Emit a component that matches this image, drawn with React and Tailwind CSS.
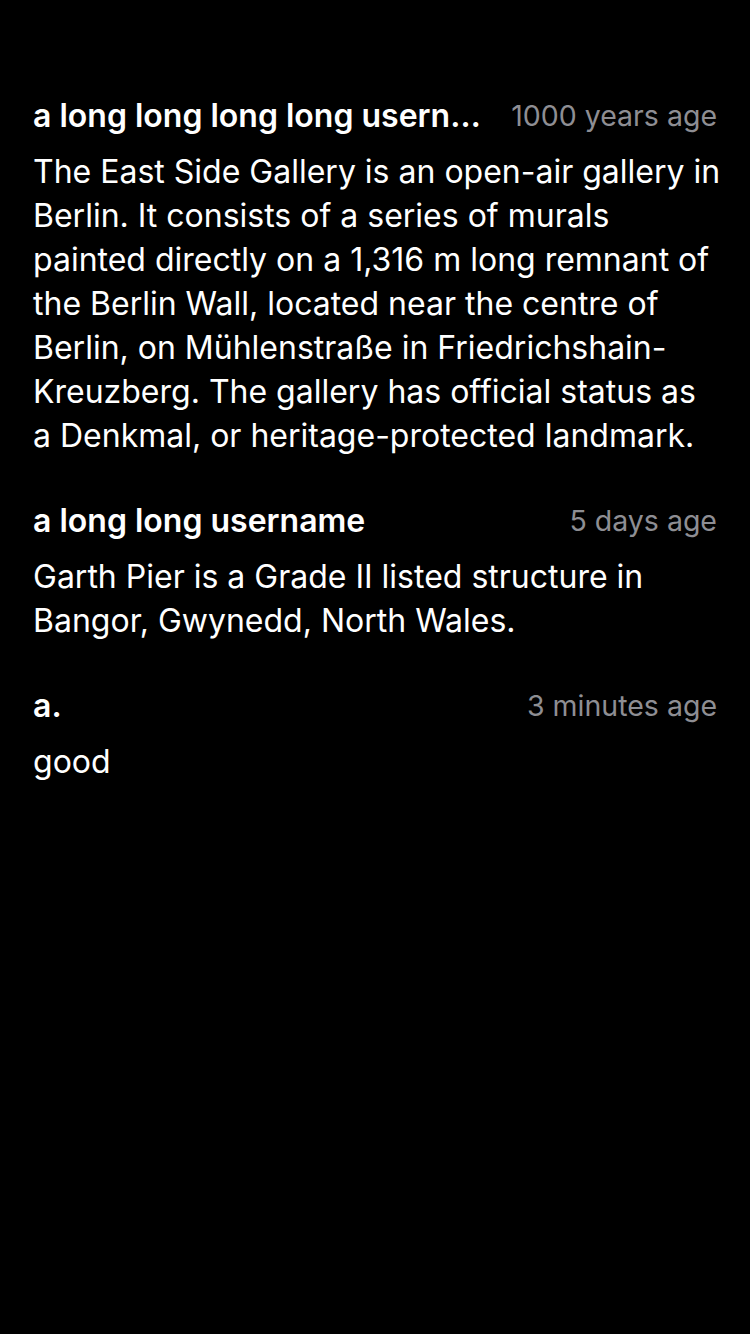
const comments = [
  {
    user: 'a long long long long username for testing',
    time: '1000 years age',
    body: 'The East Side Gallery is an open-air gallery in Berlin. It consists of a series of murals painted directly on a 1,316 m long remnant of the Berlin Wall, located near the centre of Berlin, on Mühlenstraße in Friedrichshain-Kreuzberg. The gallery has official status as a Denkmal, or heritage-protected landmark.',
  },
  {
    user: 'a long long username',
    time: '5 days age',
    body: 'Garth Pier is a Grade II listed structure in Bangor, Gwynedd, North Wales.',
  },
  { user: 'a.', time: '3 minutes age', body: 'good' },
]

export default function App() {
  return (
    <div
      className="min-h-screen bg-black text-white pt-[94px] pl-[33px] pr-[28px]"
      style={{ fontFamily: 'Inter, "Noto Sans", sans-serif' }}
    >
      {comments.map((c, i) => (
        <div key={i} className="mb-[41px]">
          <div className="flex items-center gap-[22px] h-[44px] pr-[5px]">
            <span className="flex-1 min-w-0 truncate text-[32px] font-semibold leading-[44px]">
              {c.user}
            </span>
            <span className="shrink-0 text-[28.5px] leading-[44px] text-[#8e8e93]">{c.time}</span>
          </div>
          <p className="mt-[12px] text-[32px] leading-[44px]">{c.body}</p>
        </div>
      ))}
    </div>
  )
}
